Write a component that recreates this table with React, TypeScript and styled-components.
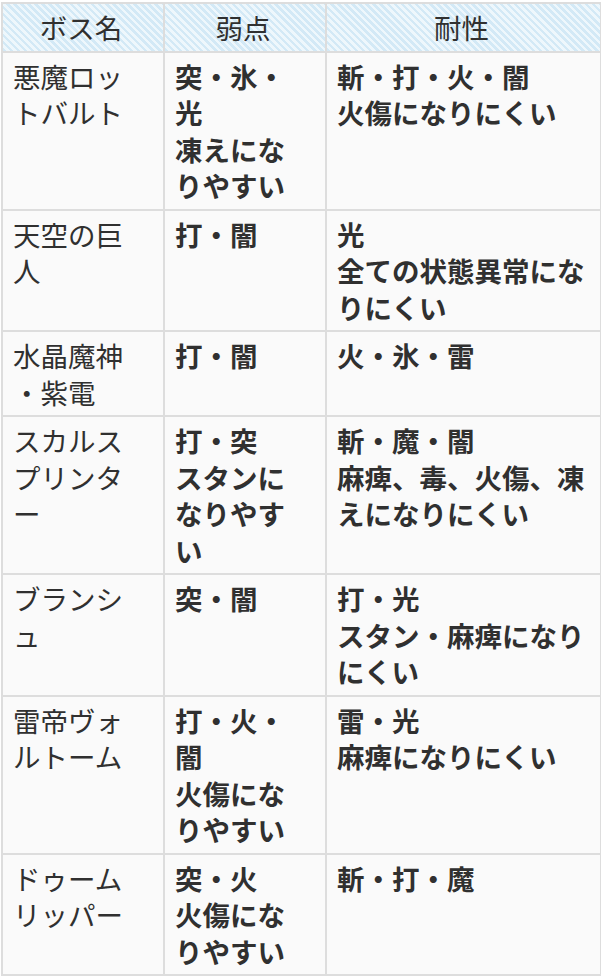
import React from "react";
import styled, { createGlobalStyle } from "styled-components";

const Global = createGlobalStyle`
  html, body { margin: 0; padding: 0; background: #ffffff; }
  body { font-family: "Noto Sans CJK JP", "Noto Sans", sans-serif; color: #303030; }
`;

const Wrap = styled.div`
  padding: 2px 1px 0 1px;
`;

const Table = styled.table`
  width: 599px;
  border-collapse: collapse;
  table-layout: fixed;
  border: 2px solid #dddddd;
  font-size: 27.5px;
  line-height: 36.5px;
`;

const HeadCell = styled.th`
  border: 2px solid #dddddd;
  padding: 5px 14px 5px 10px;
  font-weight: 400;
  text-align: center;
  color: #303030;
  background: repeating-linear-gradient(
    45deg,
    #d3e9f6 0px,
    #d3e9f6 2.5px,
    #eef7fc 2.5px,
    #eef7fc 5px
  );
`;

const Cell = styled.td<{ $bold?: boolean }>`
  border: 2px solid #dddddd;
  padding: 5px 14px 5px 10px;
  vertical-align: top;
  text-align: left;
  background: #fafafa;
  color: #303030;
  font-weight: ${(p) => (p.$bold ? 700 : 400)};
  line-break: anywhere;
  word-break: break-all;
`;

type Row = { name: string; weak: string[]; resist: string[] };

const rows: Row[] = [
  { name: "悪魔ロットバルト", weak: ["突・氷・光", "凍えになりやすい"], resist: ["斬・打・火・闇", "火傷になりにくい"] },
  { name: "天空の巨人", weak: ["打・闇"], resist: ["光", "全ての状態異常になりにくい"] },
  { name: "水晶魔神・紫電", weak: ["打・闇"], resist: ["火・氷・雷"] },
  { name: "スカルスプリンター", weak: ["打・突", "スタンになりやすい"], resist: ["斬・魔・闇", "麻痺、毒、火傷、凍えになりにくい"] },
  { name: "ブランシュ", weak: ["突・闇"], resist: ["打・光", "スタン・麻痺になりにくい"] },
  { name: "雷帝ヴォルトーム", weak: ["打・火・闇", "火傷になりやすい"], resist: ["雷・光", "麻痺になりにくい"] },
  { name: "ドゥームリッパー", weak: ["突・火", "火傷になりやすい"], resist: ["斬・打・魔"] },
];

const Lines = ({ items }: { items: string[] }) => (
  <>
    {items.map((t, i) => (
      <React.Fragment key={i}>
        {i > 0 && <br />}
        {t}
      </React.Fragment>
    ))}
  </>
);

export default function App() {
  return (
    <Wrap>
      <Global />
      <Table>
        <colgroup>
          <col style={{ width: 162 }} />
          <col style={{ width: 162 }} />
          <col style={{ width: 275 }} />
        </colgroup>
        <thead>
          <tr>
            <HeadCell>ボス名</HeadCell>
            <HeadCell>弱点</HeadCell>
            <HeadCell>耐性</HeadCell>
          </tr>
        </thead>
        <tbody>
          {rows.map((r) => (
            <tr key={r.name}>
              <Cell>{r.name}</Cell>
              <Cell $bold>
                <Lines items={r.weak} />
              </Cell>
              <Cell $bold>
                <Lines items={r.resist} />
              </Cell>
            </tr>
          ))}
        </tbody>
      </Table>
    </Wrap>
  );
}
